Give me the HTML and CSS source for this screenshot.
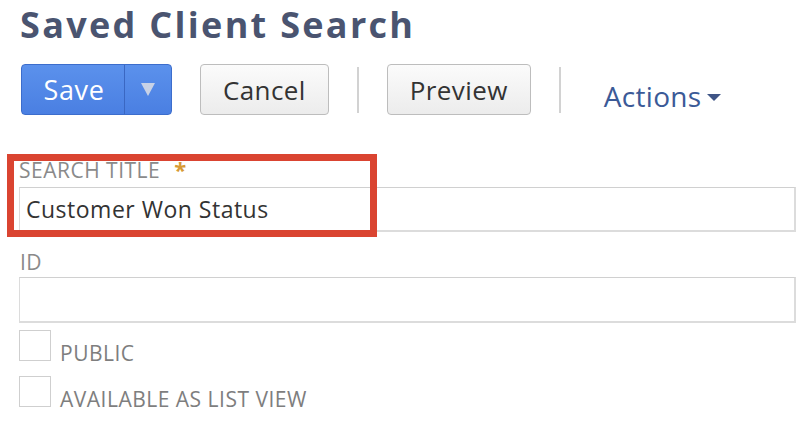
FILE: index.html
```html
<!DOCTYPE html>
<html>
<head>
<meta charset="utf-8">
<link rel="stylesheet" href="styles.css">
</head>
<body>
<div class="page">
  <h1 class="title">Saved Client Search</h1>
  <div class="toolbar">
    <div class="btn-split">
      <span class="btn-split-main">Save</span>
      <span class="btn-split-arrow"><span class="tri-down"></span></span>
    </div>
    <span class="btn">Cancel</span>
    <span class="sep"></span>
    <span class="btn">Preview</span>
    <span class="sep"></span>
    <span class="actions">Actions<span class="caret"></span></span>
  </div>

  <div class="form">
    <div class="field field-title">
      <div class="label">SEARCH TITLE<span class="req">*</span></div>
      <div class="input">Customer Won Status</div>
      <div class="highlight"></div>
    </div>
    <div class="field field-id">
      <div class="label">ID</div>
      <div class="input"></div>
    </div>
    <div class="check-row">
      <span class="checkbox"></span>
      <span class="check-label">PUBLIC</span>
    </div>
    <div class="check-row">
      <span class="checkbox"></span>
      <span class="check-label">AVAILABLE AS LIST VIEW</span>
    </div>
  </div>
</div>
</body>
</html>
```

FILE: styles.css
```css
* { box-sizing: border-box; }
html, body {
  margin: 0;
  padding: 0;
  background: #ffffff;
}
body {
  font-family: "Open Sans", "Noto Sans", sans-serif;
  width: 812px;
  height: 424px;
  overflow: hidden;
}
.page {
  padding-left: 20px;
  position: relative;
}
.title {
  margin: 0;
  font-size: 36px;
  line-height: 49px;
  font-weight: 700;
  color: #4a5470;
  letter-spacing: 2.3px;
}
.toolbar {
  display: flex;
  align-items: center;
  gap: 28px;
  margin-top: 15px;
  margin-left: 1px;
  height: 51px;
}
.btn-split {
  display: flex;
  height: 51px;
  width: 151px;
  border: 1px solid #3c6dcc;
  border-radius: 4px;
  background: linear-gradient(#5b91ec, #4a7fe2);
  color: #ffffff;
  overflow: hidden;
}
.btn-split-main {
  width: 103px;
  display: flex;
  align-items: center;
  justify-content: center;
  font-size: 27px;
  letter-spacing: 0.6px;
  padding-left: 2px;
  border-right: 1px solid #3a67c2;
}
.btn-split-arrow {
  flex: 1;
  display: flex;
  align-items: center;
  justify-content: center;
  padding-bottom: 1px;
}
.tri-down {
  width: 0;
  height: 0;
  border-left: 7px solid transparent;
  border-right: 7px solid transparent;
  border-top: 13px solid #c8d2e6;
}
.btn {
  height: 51px;
  display: flex;
  align-items: center;
  justify-content: center;
  padding: 0 22px;
  font-size: 26px;
  letter-spacing: 0.4px;
  color: #333333;
  border: 1px solid #bdbdbd;
  border-radius: 4px;
  background: linear-gradient(#fbfbfb, #ececec);
}
.sep {
  width: 2px;
  height: 46px;
  background: #d2d2d2;
}
.actions {
  margin-left: 15px;
  padding-top: 12px;
  font-size: 28px;
  letter-spacing: 0.3px;
  color: #3b5a97;
  display: flex;
  align-items: center;
}
.caret {
  width: 0;
  height: 0;
  margin-left: 6px;
  margin-top: 4px;
  border-left: 7px solid transparent;
  border-right: 7px solid transparent;
  border-top: 7px solid #3f5586;
}
.form {
  margin-top: 42px;
}
.field {
  position: relative;
  width: 777px;
  margin-left: -1px;
}
.label {
  font-size: 21px;
  line-height: 24px;
  letter-spacing: 0.5px;
  color: #8a8a8a;
}
.req {
  color: #d79a35;
  font-weight: 700;
  font-size: 22px;
  margin-left: 14px;
}
.field-title .input { margin-top: 5px; }
.field-id { margin-top: 18px; }
.field-id .label { margin-left: 1px; }
.field-id .input { margin-top: 3px; height: 46px; }
.input {
  height: 45px;
  border: 2px solid #dcdcdc;
  border-width: 1px 2px 2px 1px;
  border-top-color: #d0d0d0;
  padding-left: 6px;
  display: flex;
  align-items: center;
  font-size: 23px;
  letter-spacing: 0.5px;
  color: #333333;
}
.highlight {
  position: absolute;
  left: -12px;
  top: -3px;
  width: 370px;
  height: 83px;
  border: 7px solid #da4431;
}
.check-row {
  display: flex;
  height: 31px;
  margin-left: -1px;
}
.field-id + .check-row { margin-top: 7px; }
.check-row + .check-row { margin-top: 15px; }
.checkbox {
  width: 32px;
  height: 31px;
  border: 1px solid #cfcfcf;
  background: #fff;
}
.check-label {
  margin-left: 9px;
  font-size: 21px;
  line-height: 24px;
  letter-spacing: 0.5px;
  padding-top: 11px;
  color: #7e7e7e;
  white-space: nowrap;
}
```
